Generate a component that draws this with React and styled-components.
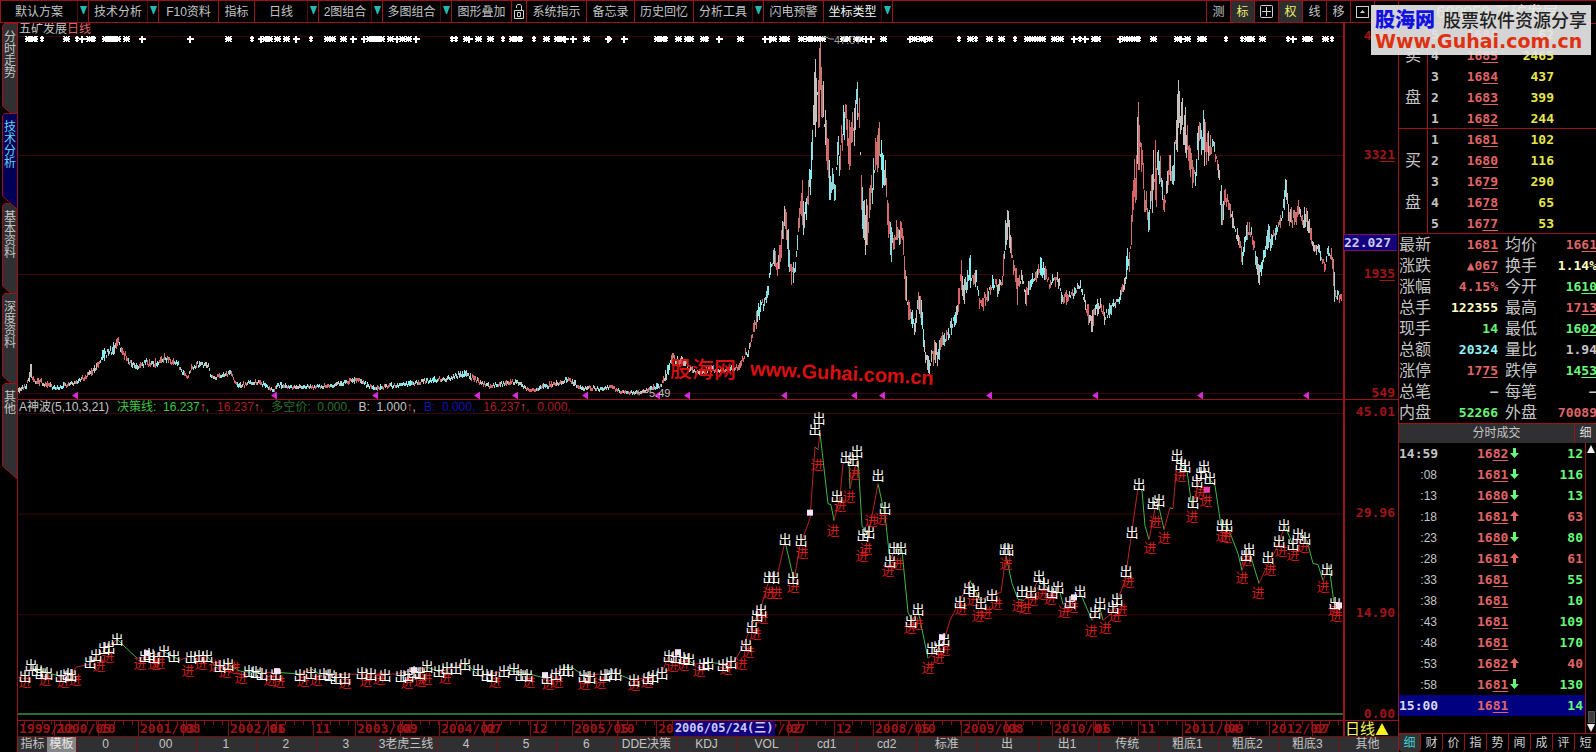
import React from 'react';
import styled, { createGlobalStyle, css } from 'styled-components';

const RED = '#9c1216';
const TEXT = '#c4c4c4';
const UP = '#e06466';
const DOWN = '#66f878';
const YELLOW = '#e6e64a';
const CREAM = '#ffffc0';
const CYAN = '#8ff4f8';

const Global = createGlobalStyle`
  *, *::before, *::after { box-sizing: border-box; }
  body { margin: 0; background: #000; color: ${TEXT};
    font: 12px/16px "Liberation Sans", "Noto Sans CJK SC", sans-serif; }
  button { font: inherit; color: inherit; background: none; border: 0; padding: 0; margin: 0; cursor: pointer; white-space: nowrap; }
  table { border-collapse: collapse; border-spacing: 0; }
  td, th { padding: 0; font-weight: normal; text-align: left; }
`;

const mono = css`font-family: "DejaVu Sans Mono", "Noto Sans CJK SC", monospace; font-size: 13px; font-weight: bold;`;

const Screen = styled.div`position: relative; display: flex; min-height: 100vh; overflow: hidden;`;
const Main = styled.main`flex: 1; min-width: 0; display: flex; flex-direction: column;`;

/* toolbar */
const Toolbar = styled.nav`
  display: flex; height: 23px; flex: none; border: solid ${RED}; border-width: 1px 0 1px 1px;
`;
const ToolGroup = styled.div`display: flex; width: ${p => p.$w}px; border-right: 1px solid ${RED};`;
const ToolButton = styled.button`
  flex: 1; display: flex; align-items: center; justify-content: center;
  color: ${p => (p.$strong ? '#f4f4f4' : TEXT)}; line-height: 22px;
`;
const DropButton = styled.button`width: 11px; border-left: 1px solid #4a0c0c; display: flex; justify-content: center; padding-top: 5px;`;
const ToolSpacer = styled.div`flex: 1;`;
const IconTool = styled.button`
  width: 24px; display: flex; align-items: center; justify-content: center;
  border-left: 1px solid ${RED}; background: ${p => (p.$on ? '#2e2e2e' : 'none')};
  color: ${p => (p.$on ? '#f0f070' : TEXT)};
`;

/* workspace */
const Work = styled.div`flex: 1; display: flex; min-height: 0;`;
const SideTabs = styled.nav`width: 18px; flex: none; display: flex; flex-direction: column; border-right: 1px solid ${RED};`;
const SideTab = styled.button`
  position: relative; z-index: ${p => (p.$on ? 2 : 1)}; height: 90px; flex: none;
  writing-mode: vertical-rl; text-align: left; padding: 7px 0 0 0; line-height: 16px; width: 17px;
  color: ${p => (p.$on ? '#5fd8ee' : TEXT)};
`;
const SideShape = styled.svg`position: absolute; left: 2px; top: 0; z-index: -1; overflow: visible;`;
const Board = styled.div`
  flex: 1; min-width: 0; display: grid;
  grid-template-columns: minmax(0, 1fr) 55px;
  grid-template-rows: minmax(280px, 376fr) minmax(240px, 321fr) 16px 16px;
`;
const Pane = styled.section`position: relative; overflow: hidden; ${p => p.$line && `border-top: 1px solid ${RED};`}`;
const Canvas = styled.svg`position: absolute; inset: 0; width: 100%; height: 100%; display: block;`;
const PaneTitle = styled.h1`margin: 0; padding: 0 1px; font-size: 12px; line-height: 13px; font-weight: normal; position: relative; em { color: ${UP}; font-style: normal; }`;
const Legend = styled.div`position: relative; display: flex; padding: 0 1px; line-height: 14px; white-space: nowrap; gap: 8px;`;
const LegendItem = styled.span`color: ${p => p.$c}; i { font-style: normal; color: ${UP}; }`;
const Axis = styled.div`
  position: relative; display: flex; flex-direction: column; justify-content: space-between;
  padding: ${p => (p.$line ? 6 : 7)}px 3px 0 0; border: solid ${RED}; border-width: ${p => (p.$line ? 1 : 0)}px 0 0 2px;
  ${mono} line-height: 12px; text-align: right; color: #a01418;
`;
const AxisCursor = styled.span`
  position: absolute; left: -1px; right: 1px; top: 56%; background: #14007c; border: solid #7a1060; border-width: 1px 0;
  color: #c8ccf8; line-height: 15px; text-align: left;
`;
const TimeAxis = styled.div`position: relative; border-top: 1px solid ${RED}; overflow: hidden;`;
const DateCursor = styled.span`
  position: absolute; left: 49.5%; top: 0; padding: 0 1px; background: #14007c; color: #c8ccf8; ${mono}
  font-size: 12px; line-height: 15px; white-space: nowrap;
`;
const PeriodButton = styled.button`
  border: solid ${RED}; border-width: 1px 0 0 2px; color: #f4f45a; font-size: 15px; line-height: 15px; text-align: left;
  display: flex; align-items: center; overflow: hidden;
`;
const Templates = styled.nav`grid-column: 1 / 3; display: flex; background: #303032; border-top: 1px solid #611; overflow: hidden;`;
const TemplateKind = styled.button`
  width: 29px; line-height: 15px; color: ${p => (p.$on ? '#e8e8e8' : TEXT)};
  background: ${p => (p.$on ? '#858585' : 'none')};
`;
const TemplateTab = styled.button`flex: 1 1 0; min-width: 0; line-height: 15px; padding-right: 2px; border-left: 1px solid #701418; color: ${TEXT};`;

/* quote panel */
const Quote = styled.aside`width: 198px; flex: none; border-left: 1px solid ${RED}; display: flex; flex-direction: column; overflow: hidden;`;
const QuoteHead = styled.header`
  height: 24px; border: solid ${RED}; border-width: 1px 0; font-size: 16px; line-height: 24px; color: ${CREAM}; text-align: center;
`;
const BookBlock = styled.section`display: flex; height: 105px; border-bottom: 1px solid ${RED};`;
const SideCell = styled.div`
  display: flex; flex-direction: column; width: 29px; flex: none; border-right: 1px solid ${RED};
  font-size: 16px; line-height: 21px; text-align: center; padding-top: 21px; gap: 21px;
`;
const BookRows = styled.table`flex: 1; table-layout: fixed; width: 168px; td { height: 21px; line-height: 21px; }`;
const Level = styled.td`${mono} width: 20px; && { padding-left: 3px; }`;
const Num = styled.td`
  ${mono} && { text-align: right; width: ${p => p.$w || 'auto'}; padding-right: ${p => p.$pad || 0}px; color: ${p => p.$c || TEXT}; }
`;
const U = styled.span`text-decoration: underline; text-decoration-thickness: 1px; text-underline-offset: 2px;`;
const Stats = styled.table`width: 198px; table-layout: fixed; border-bottom: 1px solid ${RED};
  td, th { height: 21px; line-height: 21px; white-space: nowrap; }
  th { font-size: 16px; width: 34px; }`;
const TickHead = styled.div`
  display: flex; height: 19px; flex: none; background: #303032; line-height: 19px;
  h2 { flex: 1; margin: 0; font-size: 12px; line-height: 19px; font-weight: normal; text-align: center; padding-left: 20px; }
  button { width: 22px; border-left: 1px solid ${RED}; color: #ddd; }
`;
const TickArea = styled.div`flex: 1; display: flex;`;
const Ticks = styled.table`flex: 1; align-self: flex-start; table-layout: fixed; width: 186px;
  td { height: 21px; line-height: 20px; }`;
const TickRow = styled.tr`background: ${p => (p.$on ? '#000080' : 'none')};`;
const Time = styled.td`
  ${p => p.$full && mono}
  && { width: 38px; padding-left: 0; text-align: right; color: ${p => (p.$on ? '#d8d8f0' : TEXT)}; white-space: nowrap; }
`;
const TickPrice = styled.td`${mono} && { color: ${UP}; padding-left: 40px; width: 92px; white-space: nowrap; svg { margin-left: 2px; } }`;
const Scroll = styled.div`
  width: 11px; border-left: 1px solid ${RED}; display: flex; flex-direction: column; align-items: center; padding-top: 1px;
`;
const ScrollTrack = styled.span`flex: 1;`;
const ScrollButton = styled.button`height: 10px; display: flex; align-items: center;`;
const Thumb = styled.span`width: 7px; height: 12px; background: #3c3c3c; border: 1px solid #555;`;
const QuoteTabs = styled.nav`display: flex; height: 19px; flex: none; border-top: 1px solid ${RED};`;
const QuoteTab = styled.button`
  flex: 1 0 22px; height: 18px; line-height: 18px; border-right: 1px solid ${RED}; border-radius: 0 0 4px 4px;
  background: ${p => (p.$on ? '#333' : 'none')}; color: ${p => (p.$on ? '#38d0d4' : '#d0d0d0')};
`;

/* site marks */
const SiteBadge = styled.a`
  position: absolute; z-index: 5; right: 5px; top: 5px; width: 220px; height: 50px; padding: 2px 4px 0;
  background: rgba(228, 228, 228, 0.93); text-decoration: none; white-space: nowrap; overflow: hidden;
`;
const BadgeRow = styled.span`display: flex; align-items: center; gap: 8px; height: 24px;`;
const BadgeName = styled.strong`font: 900 20px/24px "Noto Sans CJK SC", sans-serif; color: #1212e0;`;
const BadgeTag = styled.span`font: 500 18px/24px "Noto Sans CJK SC", sans-serif; color: #222;`;
const BadgeUrl = styled.span`display: block; font: bold 19px/20px "DejaVu Sans", sans-serif; color: #e03010;`;
const Mark = styled.div`
  position: absolute; left: 49.2%; top: 88%; display: flex; gap: 14px; white-space: nowrap; color: #d81010;
  b { font: 500 22px/26px "Noto Sans CJK SC", sans-serif; }
  span { font: bold 20px/26px "Liberation Sans", sans-serif; transform: rotate(3deg); margin-top: 6px; }
`;

const X0 = 18, W = 1325, PY = 23, PH = 376, IY = 399, IH = 321;
const px = x => `${((x - X0) / W) * 100}%`;
const py = y => `${((y - PY) / PH) * 100}%`;
const iy = y => `${((y - IY) / IH) * 100}%`;
const pairs = s => s.trim().split(/\s+/).map(t => t.split(',').map(Number));

/* x, high, low of the daily bars */
const RANGE = pairs(`18,388,392 26,384,389 29,372,382 31,364,378 33,376,382 38,378,384 45,382,386 57,385,389 65,383,386 74,381,384
85,375,379 96,363,370 98,362,368 102,350,360 108,349,356 112,347,354 117,338,346 122,348,355 128,358,364 131,360,367 137,365,370
145,360,365 153,361,367 160,357,363 164,353,360 170,359,364 176,360,364 183,370,375 187,376,378 191,364,370 200,362,366 208,363,367
210,374,377 214,376,379 230,370,374 236,382,385 240,382,388 250,380,384 259,380,384 267,385,388 273,389,391 277,383,387 290,385,388
300,385,388 330,384,387 345,380,384 358,378,382 375,387,390 385,384,388 400,383,386 430,378,382 447,376,380 465,371,376 480,380,384
490,384,388 505,381,385 515,379,383 530,389,391 545,384,388 560,380,384 568,377,381 580,385,389 600,387,390 610,385,388 622,390,392
640,391,393 650,386,390 660,384,387 668,365,375 671,355,364 677,356,364 684,360,366 690,366,371 700,370,374 712,366,371 722,369,372
738,365,370 741,360,366 745,348,355 748,350,357 751,335,342 754,320,332 757,310,322 760,300,312 764,298,306 767,286,298 770,262,275
773,250,264 777,262,276 780,245,262 784,206,226 786,212,240 789,250,272 791,264,285 795,262,272 797,235,250 799,208,228 802,180,225
804,212,228 808,180,205 810,170,195 812,130,160 814,72,125 816,78,122 818,80,128 820,42,90 822,85,118 825,110,145 827,138,170
829,160,200 832,168,190 835,185,200 837,142,165 840,145,170 843,105,135 846,105,130 849,120,170 852,112,142 855,100,130 857,82,120
859,98,128 861,175,210 864,200,240 867,205,245 870,185,210 873,158,190 876,142,165 878,128,168 881,140,170 883,155,185 885,160,185
887,200,225 890,222,255 893,238,250 896,220,240 899,230,245 901,222,238 903,236,255 905,270,300 908,300,320 911,312,324 915,318,332
918,292,310 921,300,325 924,340,352 927,355,370 929,360,374 931,350,362 934,340,360 937,352,366 940,338,350 943,335,345 948,328,340
955,312,325 959,288,304 961,260,290 963,285,300 967,270,290 969,258,280 973,275,285 976,270,282 979,298,309 985,294,306 990,285,295
992,275,288 998,284,294 1002,276,285 1005,220,250 1007,210,240 1009,220,248 1013,260,275 1017,278,305 1021,270,280 1025,290,304
1030,280,290 1035,272,280 1038,264,275 1040,257,275 1044,268,280 1050,280,288 1057,272,282 1061,292,304 1067,294,302 1074,287,296
1080,280,288 1085,300,310 1091,316,332 1095,305,315 1100,298,308 1104,312,325 1110,305,314 1120,290,300 1124,278,290 1127,248,270
1129,252,272 1131,215,245 1133,180,210 1136,155,200 1138,102,170 1139,125,170 1142,150,165 1144,190,212 1149,210,230 1153,150,190
1155,140,200 1158,150,175 1162,180,200 1164,195,212 1168,170,185 1169,155,175 1173,165,185 1176,120,150 1178,80,128 1181,102,130
1184,115,145 1187,125,150 1189,145,170 1192,160,188 1195,172,186 1198,126,160 1201,130,155 1203,110,150 1206,142,165 1210,135,155
1214,142,152 1217,160,170 1219,170,180 1221,185,225 1224,190,205 1228,200,210 1233,218,228 1238,235,245 1242,252,265 1246,225,240
1249,222,235 1253,240,250 1259,265,285 1263,250,262 1267,230,250 1272,235,245 1276,225,235 1280,215,228 1284,190,210 1286,180,200
1289,212,226 1294,210,225 1298,200,215 1302,215,225 1306,208,222 1310,228,240 1314,245,252 1318,244,252 1324,262,272 1328,246,256
1331,248,260 1334,272,302 1337,290,300 1342,298,306`);

const BAR_COLORS = ['#d8646a', '#7ff0f4', '#c8c0bc', '#8fd8dc', '#c87870'];
const bars = (() => {
  const paths = BAR_COLORS.map(() => '');
  let seed = 11, run = 0, color = 0;
  const rnd = () => { seed = (seed * 16807) % 2147483647; return seed / 2147483647; };
  for (let i = 0; i < RANGE.length - 1; i++) {
    const [xa, ta, ba] = RANGE[i];
    const [xb, tb, bb] = RANGE[i + 1];
    for (let x = xa; x < xb; x++) {
      const k = (x - xa) / (xb - xa);
      const t = ta + (tb - ta) * k, b = ba + (bb - ba) * k, h = b - t;
      const top = Math.round(t + (x === xa ? 0 : rnd() * h * 1.1 - h * 0.4));
      const bot = Math.max(top + 3, Math.round(b - (x === xa ? 0 : rnd() * h * 1.1 - h * 0.4)));
      if (run-- <= 0) { run = Math.floor(rnd() * 3); color = Math.floor(rnd() * BAR_COLORS.length); }
      paths[color] += `M${x + 0.5} ${top}V${bot}`;
    }
  }
  return paths;
})();

/* event marks: s burst, p plus, d diamond */
const EVENTS = `28s 32s 34s 42d 66s 77d 82p 89s 94d 105s 109s 113s 117s 126s 142p 190p 228s 252d 261p 265s 269s 277s 286s 296p 311d
327s 332s 343s 353p 364p 369s 373s 377s 381s 390s 397p 402s 408s 416p 452d 456d 466s 469p 478s 490s 503d 512s 516s 521d 534d 546s
557s 561s 565p 573p 586s 608p 609d 624p 657s 661s 666d 678s 687s 690s 703s 707d 719p 740s 765p 770p 773s 782s 786s 801s 808s 812s
817s 822s 843s 847s 856s 860s 866p 871p 883s 910p 914s 921s 925p 929s 959d 970s 976d 989s 1001s 1015d 1027s 1032s 1037s 1042s 1054s
1060s 1074p 1080d 1085p 1094s 1097s 1120p 1124s 1129s 1134s 1139d 1153s 1177s 1181p 1187s 1200s 1203s 1226d 1242d 1247s 1251s
1262s 1288d 1293p 1305s 1309s 1325s 1332d`.split(/\s+/).map(t => [parseInt(t, 10), t.slice(-1)]);
const EVENT_PATH = {
  s: x => `M${x - 3} 36h2v1h1v-1h1v1h1v-1h2v1h-1v1h1v2h-1v1h1v1h-2v-1h-1v1h-1v-1h-1v1h-2v-1h1v-1h-1v-2h1v-1h-1z`,
  p: x => `M${x - 1} 36h2v2h3v2h-3v3h-2v-3h-2v-2h2z`,
  d: x => `M${x - 1} 36h2v1h1v2h-1v1h1v1h-1v1h-2v-1h-1v-1h1v-1h-1v-2h1z`,
};
const SPLITS = [76, 275, 376, 478, 516, 586, 658, 688, 785, 855, 883, 990, 1096, 1201, 1307];

const CURVE = pairs(`18,678 31,668 45,672 60,676 72,675 76,667 90,664 104,650 117,639 137,658 150,657 163,651 180,660 190,656 207,656
217,668 228,664 240,671 262,673 275,672 300,674 312,669 322,676 345,674 395,674 427,667 440,672 465,663 480,676 507,670 530,674
545,678 565,667 573,668 583,675 616,673 630,679 650,678 662,672 668,657 680,656 695,664 708,662 725,664 735,660 742,648 752,625
760,610 769,580 778,572 785,541 794,580 800,545 810,518 815,446 818,449 820,432 828,503 831,504 834,520 840,496 843,463 849,460
850,488 854,470 858,458 862,525 868,536 873,510 878,483 885,515 890,560 896,548 902,550 908,612 912,620 918,610 928,658 935,652
944,640 950,620 960,600 970,580 980,600 990,595 1001,592 1006,555 1012,583 1018,599 1024,600 1032,592 1039,578 1052,593 1060,592
1063,604 1075,597 1080,592 1092,620 1100,608 1103,620 1113,612 1125,580 1132,530 1138,487 1142,490 1145,525 1149,539 1155,508
1158,502 1164,529 1170,507 1173,508 1177,460 1187,470 1192,507 1198,485 1203,470 1215,485 1221,525 1228,527 1238,553 1242,570
1249,550 1259,583 1265,570 1278,545 1285,525 1293,545 1300,532 1307,540 1313,563 1318,564 1323,580 1329,565 1334,603 1342,608`);
const segments = down => CURVE.slice(1).map(([x, y], i) => {
  const [a, b] = CURVE[i];
  return (y > b) === down ? `M${a} ${b}L${x} ${y}` : '';
}).join('');

const EXITS = pairs(`25,677 31,666 37,671 41,674 47,674 61,677 68,675 71,676 90,663 96,656 104,649 109,648 117,640 145,657 149,655
154,658 164,652 174,657 191,658 199,657 207,657 220,667 228,665 249,672 256,673 262,675 276,675 300,676 311,674 324,675 330,676
336,679 345,679 362,674 371,675 385,676 401,677 408,676 414,673 420,674 427,667 439,672 447,669 456,669 465,665 478,671 487,676
492,677 504,672 514,670 521,676 527,676 547,679 556,675 564,671 568,671 584,677 590,678 605,676 611,675 616,675 634,681 648,679
653,677 662,674 669,657 676,658 684,659 689,660 704,665 708,664 723,666 731,663 746,646 752,628 757,616 761,611 769,578 774,578
785,539 793,579 801,540 815,429 819,418 837,496 846,457 853,460 857,451 863,535 869,532 878,475 885,508 890,562 894,548 901,548
911,622 918,610 932,649 939,647 944,640 960,603 969,589 974,592 981,604 992,596 1005,549 1008,549 1022,592 1031,593 1039,577
1044,585 1052,593 1058,588 1070,603 1080,592 1095,613 1100,604 1113,608 1117,600 1126,572 1132,532 1139,484 1153,503 1159,500
1177,455 1181,464 1185,466 1193,502 1197,481 1201,473 1204,466 1210,478 1222,525 1227,525 1246,556 1249,549 1268,558 1279,541
1284,525 1293,544 1298,534 1305,538 1327,570 1335,604`);
const ENTRIES = pairs(`25,682 45,680 63,682 75,680 99,666 108,657 140,664 154,664 159,663 188,671 201,664 215,666 225,672
234,668 241,678 270,680 279,682 303,681 316,680 345,683 366,681 379,679 407,683 420,681 426,679 445,678 495,682 529,682 548,684
557,682 584,684 600,683 634,685 647,682 672,666 683,665 699,671 726,669 741,664 748,652 755,634 762,618 769,593 776,593 793,587
802,552 817,464 833,530 840,505 849,496 854,473 862,555 866,548 871,520 881,518 888,571 897,564 910,628 917,624 928,668 938,658
944,650 961,609 973,600 978,616 986,613 996,604 1006,564 1018,606 1025,608 1032,600 1042,594 1050,599 1064,612 1072,607 1091,631
1105,628 1115,616 1121,610 1128,582 1150,547 1155,521 1164,537 1180,475 1192,516 1200,492 1206,500 1222,535 1226,536 1242,578
1246,560 1258,593 1270,570 1281,550 1293,554 1303,546 1323,587 1334,610 1336,616`);
const FLAGS = pairs('147,653 277,671 414,670 545,675 678,652 810,512 942,637 1074,597 1207,489 1339,605');

const DATES = [[19, '1999/12'], [56, '2000/05'], [100, '10'], [140, '2001/03'], [185, '08'], [230, '2002/01'], [270, '06'], [315, '11'],
  [357, '2003/04'], [402, '09'], [441, '2004/02'], [486, '07'], [532, '12'], [574, '2005/05'], [619, '10'], [658, '2006/03'],
  [746, '2007/02'], [790, '07'], [836, '12'], [875, '2008/05'], [920, '10'], [963, '2009/03'], [1008, '08'], [1054, '2010/01'],
  [1095, '06'], [1140, '11'], [1184, '2011/04'], [1228, '09'], [1271, '2012/02'], [1314, '07']];
const dateTicks = (() => {
  let d = '';
  for (let x = 24; x < 1342; x += 9) d += `M${x + 0.5} 0v4`;
  DATES.forEach(([x]) => { d += `M${x - 1.5} 0v15`; });
  return d;
})();

const TOOLS = [['默认方案', 88, 1], ['技术分析', 70, 1], ['F10资料', 60], ['指标', 36], ['日线', 64, 1], ['2图组合', 64, 1],
  ['多图组合', 69, 1], ['图形叠加', 60], [null, 15], ['系统指示', 60], ['备忘录', 48], ['历史回忆', 59], ['分析工具', 70, 1],
  ['闪电预警', 60], ['坐标类型', 69, 1]];
const SIDE = ['分时走势', '技术分析', '基本资料', '深度资料', '其他'];
const TEMPLATES = ['0', '00', '1', '2', '3', '3老虎三线', '4', '5', '6', 'DDE决策', 'KDJ', 'VOL', 'cd1', 'cd2', '标准', '出', '出1',
  '传统', '粗底1', '粗底2', '粗底3', '其他'];
const SELL = [['5', '1686', '62'], ['4', '1685', '2465'], ['3', '1684', '437'], ['2', '1683', '399'], ['1', '1682', '244']];
const BUY = [['1', '1681', '102'], ['2', '1680', '116'], ['3', '1679', '290'], ['4', '1678', '65'], ['5', '1677', '53']];
const STATS = [
  ['最新', '1681', UP, 1, '均价', '1661', UP, 1],
  ['涨跌', '▲067', UP, 1, '换手', '1.14%', CREAM, 0],
  ['涨幅', '4.15%', UP, 0, '今开', '1610', DOWN, 1],
  ['总手', '122355', CREAM, 0, '最高', '1713', UP, 1],
  ['现手', '14', DOWN, 0, '最低', '1602', DOWN, 1],
  ['总额', '20324', CYAN, 0, '量比', '1.94', TEXT, 0],
  ['涨停', '1775', UP, 1, '跌停', '1453', DOWN, 1],
  ['总笔', '—', TEXT, 0, '每笔', '—', TEXT, 0],
  ['内盘', '52266', DOWN, 0, '外盘', '70089', UP, 0],
];
const TICKS = [['14:59', '1682', 'd', '12'], [':08', '1681', 'd', '116'], [':13', '1680', 'd', '13'], [':18', '1681', 'u', '63'],
  [':23', '1680', 'd', '80'], [':28', '1681', 'u', '61'], [':33', '1681', '', '55'], [':38', '1681', '', '10'],
  [':43', '1681', '', '109'], [':48', '1681', '', '170'], [':53', '1682', 'u', '40'], [':58', '1681', 'd', '130'],
  ['15:00', '1681', '', '14']];
const QTABS = ['细', '财', '价', '指', '势', '闻', '成', '评', '短'];

const Price = ({ v }) => <>{v.slice(0, -2)}<U>{v.slice(-2)}</U></>;
const Triangle = () => <svg width="7" height="8" aria-hidden="true"><path d="M0 0h7L4 8H3z" fill="#25b8ae" /></svg>;

const Lock = () => (
  <svg width="12" height="17" fill="none" stroke="#d0d0d0" aria-hidden="true">
    <path d="M1.5 7.5h9v8h-9zM3.5 5V3L4.500 1.500h3L8.500 3V7.500M4.500 9.500h3v4h-3z" />
  </svg>
);

const BookSection = ({ side, rows }) => (
  <BookBlock aria-label={`${side}盘`}>
    <SideCell><span>{side}</span><span>盘</span></SideCell>
    <BookRows>
      <tbody>
        {rows.map(([lv, p, v]) => (
          <tr key={lv}>
            <Level>{lv}</Level>
            <Num $w="50px" $c={UP}><Price v={p} /></Num>
            <Num $pad={42} $c={YELLOW}>{v}</Num>
          </tr>
        ))}
      </tbody>
    </BookRows>
  </BookBlock>
);

const PriceChart = () => (
  <Canvas role="img" aria-label="五矿发展日线">
    <svg width="100%" height="100%" viewBox={`${X0} ${PY} ${W} ${PH}`} preserveAspectRatio="none">
      <path d="M18 36.5H1343M18 155.500H1343M18 274.500H1343M18 393.500H1343" stroke="#38080c" />
      {bars.map((d, i) => <path key={i} d={d} stroke={BAR_COLORS[i]} />)}
      {EVENTS.map(([x, k], i) => <path key={i} d={EVENT_PATH[k](x)} fill="#fff" />)}
      {SPLITS.map(x => <path key={x} d={`M${x - 4} 395.500l6-4v8z`} fill="#d42cd4" />)}
      <path d="M822 37h4l4 2h4M636 392.500h12M639 389.500l-3 3 3 3" stroke="#b0b0b0" fill="none" />
    </svg>
    <text x={px(834)} y={py(44)} fill="#a0a0a0" fontSize="11">47.07</text>
    <text x={px(649)} y={py(397)} fill="#c0c0c0" fontSize="11">5.49</text>
  </Canvas>
);

const SignalChart = () => (
  <Canvas role="img" aria-label="A神波">
    <svg width="100%" height="100%" viewBox={`${X0} ${IY} ${W} ${IH}`} preserveAspectRatio="none">
      <path d="M18 412.500H1343M18 513.500H1343M18 614.500H1343" stroke="#38080c" />
      <path d={segments(true)} stroke="#3fb848" fill="none" />
      <path d={segments(false)} stroke="#b82424" fill="none" />
      <path d="M18 714H1343" stroke="#2c6c30" strokeWidth="2" />
    </svg>
    <g fill="#d41c1c" fontSize="13" textAnchor="middle">
      {ENTRIES.map(([x, y], i) => <text key={i} x={px(x)} y={iy(y + 4)}>进</text>)}
    </g>
    <g fill="#fff" fontSize="13" textAnchor="middle">
      {EXITS.map(([x, y], i) => <text key={i} x={px(x)} y={iy(y + 4)}>出</text>)}
    </g>
    <svg width="100%" height="100%" viewBox={`${X0} ${IY} ${W} ${IH}`} preserveAspectRatio="none">
      {FLAGS.map(([x, y]) => (
        <path key={x} d={`M${x - 3} ${y - 3}h6v6h-6z`} fill={x === 1207 ? '#f040b0' : '#f4e4fc'} />
      ))}
    </svg>
  </Canvas>
);

export default function App() {
  return (
    <Screen>
      <Global />
      <Main>
        <Toolbar>
          {TOOLS.map(([t, w, drop], i) => (
            <ToolGroup key={i} $w={w}>
              {t
                ? <ToolButton $strong={t === '坐标类型'}>{t}</ToolButton>
                : <ToolButton aria-label="锁定"><Lock /></ToolButton>}
              {drop && <DropButton aria-label={`${t}菜单`}><Triangle /></DropButton>}
            </ToolGroup>
          ))}
          <ToolSpacer />
          <IconTool>测</IconTool>
          <IconTool $on>标</IconTool>
          <IconTool aria-label="网格">
            <svg width="13" height="13" fill="none" stroke="#d0d0d0"><rect x="0.5" y="0.5" width="12" height="12" rx="1" /><path d="M6.500 2v9M2 6.500h9" /></svg>
          </IconTool>
          <IconTool $on>权</IconTool>
          <IconTool>线</IconTool>
          <IconTool>移</IconTool>
          <IconTool aria-label="展开">
            <svg width="13" height="12"><rect x="0.5" y="0.5" width="12" height="11" fill="none" stroke="#d0d0d0" /><path d="M4 7l2.500-3L9 7z" fill="#d0d0d0" /></svg>
          </IconTool>
          <IconTool aria-label="更多" />
        </Toolbar>
        <Work>
          <SideTabs>
            {SIDE.map((t, i) => (
              <SideTab key={t} $on={i === 1}>
                <SideShape width="16" height="97" aria-hidden="true">
                  <path d="M15.500 0.500H2.500L0.500 3V83L15.500 96.500z" fill={i === 1 ? '#000058' : '#303032'} stroke={RED} />
                </SideShape>
                {t}
              </SideTab>
            ))}
          </SideTabs>
          <Board>
            <Pane>
              <PriceChart />
              <PaneTitle>五矿发展<em>日线</em></PaneTitle>
              <Mark aria-hidden="true"><b>股海网</b><span>www.Guhai.com.cn</span></Mark>
            </Pane>
            <Axis>
              <span>47<U>07</U></span><span>33<U>21</U></span><span>19<U>35</U></span><span>549</span>
              <AxisCursor>22.027</AxisCursor>
            </Axis>
            <Pane $line>
              <SignalChart />
              <Legend>
                <LegendItem $c={TEXT}>A神波(5,10,3,21)</LegendItem>
                <LegendItem $c="#3cc844">决策线:&nbsp; 16.237<i>↑</i>,</LegendItem>
                <LegendItem $c="#b01c20">16.237<i>↑</i>,</LegendItem>
                <LegendItem $c="#2c7030">多空价:&nbsp; 0.000,</LegendItem>
                <LegendItem $c={TEXT}>B:&nbsp; 1.000<i>↑</i>,</LegendItem>
                <LegendItem $c="#1414b4">B:&nbsp; 0.000,</LegendItem>
                <LegendItem $c="#b01c20">16.237<i>↑</i>,</LegendItem>
                <LegendItem $c="#b01c20">0.000,</LegendItem>
              </Legend>
            </Pane>
            <Axis $line><span>45.01</span><span>29.96</span><span>14.90</span><span>0.00</span></Axis>
            <TimeAxis>
              <Canvas aria-label="日期">
                <svg width="100%" height="100%" viewBox={`${X0} 0 ${W} 15`} preserveAspectRatio="none">
                  <path d={dateTicks} stroke="#7c1216" />
                </svg>
                <g fill="#a01418" fontFamily="DejaVu Sans Mono, monospace" fontSize="13" fontWeight="bold">
                  {DATES.map(([x, t]) => <text key={x} x={px(x)} y="12">{t}</text>)}
                </g>
              </Canvas>
              <DateCursor>2006/05/24(三)</DateCursor>
            </TimeAxis>
            <PeriodButton>日线<svg width="14" height="13" aria-hidden="true"><path d="M7 1l6.500 12H0.500z" fill="#f8f020" /></svg></PeriodButton>
            <Templates>
              <TemplateKind>指标</TemplateKind>
              <TemplateKind $on>模板</TemplateKind>
              {TEMPLATES.map(t => <TemplateTab key={t}>{t}</TemplateTab>)}
            </Templates>
          </Board>
        </Work>
      </Main>
      <Quote>
        <QuoteHead>600058 五矿发展</QuoteHead>
        <BookSection side="卖" rows={SELL} />
        <BookSection side="买" rows={BUY} />
        <Stats>
          <tbody>
            {STATS.map(([a, av, ac, au, b, bv, bc, bu]) => (
              <tr key={a}>
                <th scope="row">{a}</th>
                <Num $w="72px" $pad={7} $c={ac}>{au ? <Price v={av} /> : av}</Num>
                <th scope="row">{b}</th>
                <Num $c={bc}>{bu ? <Price v={bv} /> : bv}</Num>
              </tr>
            ))}
          </tbody>
        </Stats>
        <TickHead><h2>分时成交</h2><button>细</button></TickHead>
        <TickArea>
          <Ticks>
            <tbody>
              {TICKS.map(([t, p, dir, v], i) => (
                <TickRow key={t} $on={i === 12}>
                  <Time $full={t.length > 3} $on={i === 12}>{t}</Time>
                  <TickPrice>
                    <Price v={p} />
                    {dir && (
                      <svg width="9" height="10" aria-label={dir === 'u' ? '升' : '降'}>
                        <path d={dir === 'u' ? 'M4.500 0L9 5H6v5H3V5H0z' : 'M4.500 10L9 5H6V0H3v5H0z'} fill={dir === 'u' ? UP : DOWN} />
                      </svg>
                    )}
                  </TickPrice>
                  <Num $pad={2} $c={dir === 'u' ? UP : DOWN}>{v}</Num>
                </TickRow>
              ))}
            </tbody>
          </Ticks>
          <Scroll>
            <ScrollButton aria-label="上翻"><svg width="8" height="8"><path d="M4 0l4 8H0z" fill="#eee" /></svg></ScrollButton>
            <ScrollTrack />
            <Thumb />
            <ScrollButton aria-label="下翻"><svg width="8" height="8"><path d="M0 0h8L4 8z" fill="#eee" /></svg></ScrollButton>
          </Scroll>
        </TickArea>
        <QuoteTabs>{QTABS.map((t, i) => <QuoteTab key={t} $on={i === 0}>{t}</QuoteTab>)}</QuoteTabs>
      </Quote>
      <SiteBadge href="#">
        <BadgeRow><BadgeName>股海网</BadgeName><BadgeTag>股票软件资源分享</BadgeTag></BadgeRow>
        <BadgeUrl>Www.Guhai.com.cn</BadgeUrl>
      </SiteBadge>
    </Screen>
  );
}
